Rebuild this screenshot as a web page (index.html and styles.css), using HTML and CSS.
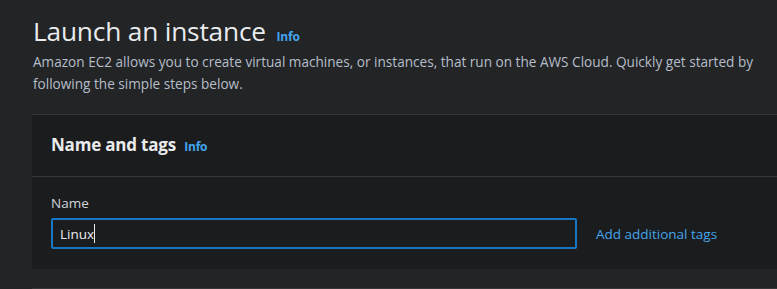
FILE: index.html
```html
<!DOCTYPE html>
<html lang="en">
<head>
    <meta charset="UTF-8">
    <title>Launch an instance</title>
    <link rel="stylesheet" href="styles.css">
</head>
<body>
    <div class="page">
        <div class="page-header">
            <h1>Launch an instance <a class="info" href="#">Info</a></h1>
            <p class="lead">Amazon EC2 allows you to create virtual machines, or instances, that run on the AWS Cloud. Quickly get started by following the simple steps below.</p>
        </div>

        <div class="container">
            <div class="container-header">
                <h2>Name and tags <a class="info" href="#">Info</a></h2>
            </div>
            <div class="container-body">
                <label class="field-label" for="name">Name</label>
                <div class="field-row">
                    <div class="input"><span>Linux</span><span class="caret"></span></div>
                    <a class="link" href="#">Add additional tags</a>
                </div>
            </div>
        </div>

        <div class="container next"></div>
    </div>
</body>
</html>
```

FILE: styles.css
```css
body {
    margin: 0;
    background: #222426;
    font-family: 'Open Sans', sans-serif;
    color: #d1d5db;
    overflow: hidden;
}

.page {
    padding: 15px 0 0 32px;
}

.page-header {
    padding-left: 1px;
}

h1 {
    margin: 0;
    font-size: 26.3px;
    font-weight: 400;
    line-height: 32px;
    color: #e9ebed;
    letter-spacing: -0.2px;
}

.info {
    font-size: 12px;
    font-weight: 700;
    line-height: 1;
    color: #42a5f0;
    text-decoration: none;
    margin-left: 4px;
}

.lead {
    margin: 4px 0 0;
    font-size: 13.6px;
    line-height: 22px;
    color: #b6bec9;
    max-width: 730px;
}

.container {
    margin-top: 19px;
    background: #1b1c1e;
    border-top: 1px solid #35373a;
}

.container-header {
    height: 61px;
    display: flex;
    align-items: center;
    padding-left: 19px;
    border-bottom: 1px solid #35373a;
}

h2 {
    margin: 0;
    font-size: 17px;
    font-weight: 700;
    line-height: 1.2;
    color: #e9ebed;
    letter-spacing: -0.2px;
}

.container-body {
    padding: 17px 0 20px 19px;
}

.field-label {
    display: block;
    font-size: 13.5px;
    color: #d1d5db;
    line-height: 18px;
}

.field-row {
    display: flex;
    align-items: center;
    gap: 19px;
    margin-top: 6px;
}

.input {
    width: 515px;
    height: 27px;
    border: 2px solid #1777c5;
    border-radius: 2px;
    display: flex;
    align-items: center;
    padding-left: 7px;
    font-size: 13.5px;
    color: #e9ebed;
}

.caret {
    width: 1px;
    height: 19px;
    background: #e9ebed;
}

.link {
    font-size: 13.5px;
    color: #44a6eb;
    text-decoration: none;
}

.next {
    margin-top: 19px;
    height: 20px;
}
```
